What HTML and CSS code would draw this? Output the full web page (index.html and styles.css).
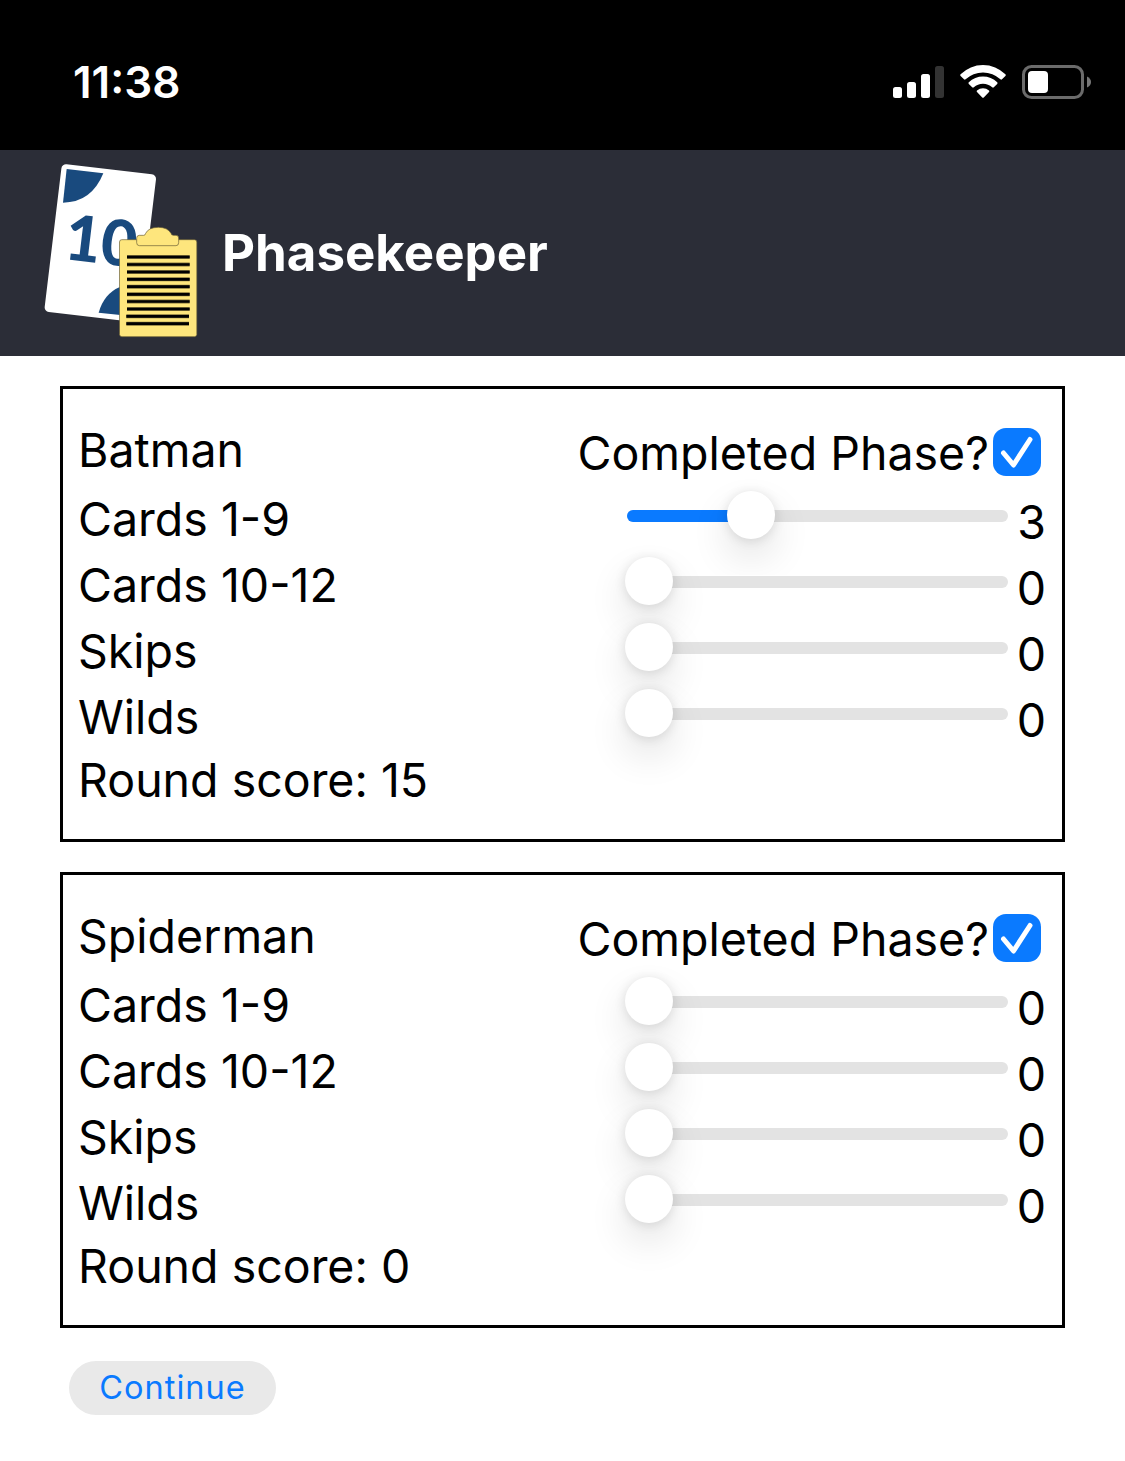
FILE: index.html
```html
<!DOCTYPE html>
<html lang="en">
<head>
<meta charset="utf-8">
<title>Phasekeeper</title>
<link rel="stylesheet" href="styles.css">
</head>
<body>
<div class="status">
  <span class="time">11:38</span>
  <svg class="status-icons" width="200" height="36" viewBox="892 64 200 36">
    <g fill="#fff">
      <rect x="893" y="87" width="9" height="11" rx="2.5"/>
      <rect x="907" y="82" width="9" height="16" rx="2.5"/>
      <rect x="921" y="74" width="9" height="24" rx="2.5"/>
      <rect x="935" y="66" width="9" height="32" rx="2.5" fill="#333"/>
      <path d="M960.6 74.2A32 32 0 0 1 1005.4 74.2Q1006.2 75 1005.4 75.9L1002 79.3Q1001.2 80 1000.4 79.3A25.500 25.500 0 0 0 965.600 79.3Q964.800 80 964 79.3L960.600 75.900Q959.800 75 960.600 74.200Z"/>
      <path d="M968.800 82.300A20.500 20.500 0 0 1 997.200 82.300Q998 83.100 997.200 84L993.800 87.300Q993 88 992.200 87.300A13.500 13.500 0 0 0 973.800 87.300Q973 88 972.200 87.300L968.800 84Q968 83.100 968.800 82.300Z"/>
      <path d="M977 90.400A9.500 9.500 0 0 1 989 90.400Q989.800 91.200 989 92L984 97.200Q983 98.200 982 97.200L977 92Q976.200 91.200 977 90.400Z"/>
      <rect x="1028" y="71" width="20" height="22" rx="4"/>
    </g>
    <rect x="1023.500" y="66.500" width="59" height="31" rx="8" fill="none" stroke="#6b6b6b" stroke-width="3"/>
    <path d="M1087 76.500Q1091 78.500 1091 82Q1091 85.500 1087 87.500Z" fill="#777"/>
  </svg>
</div>
<header class="header">
  <svg class="logo" width="190" height="206" viewBox="0 0 570 618">
    <path d="M108 57L364 87L314 502L58 472Z" fill="#fff" stroke="#fff" stroke-width="28" stroke-linejoin="round"/>
    <path d="M110 57L220 70Q184 158 99 158Z" fill="#194a7e"/>
    <path d="M206 488Q222 432 268 412H300V498Z" fill="#194a7e"/>
    <text class="logo-text" transform="translate(99 327) rotate(6.800)" textLength="216" lengthAdjust="spacingAndGlyphs">10</text>
    <g fill="#fee67d" stroke="#665c35" stroke-width="2">
      <rect x="268.500" y="269" width="232" height="291" rx="7"/>
      <path d="M328 256H341Q346 256 347 250Q356 232 385 232Q413 232 423 250Q424 256 430 256H438Q446 256 446 264V278Q446 287 438 287H328Q320 287 320 278V264Q320 256 328 256Z"/>
    </g>
    <path d="M291 321H479M291 343.500H479M291 366H479M291 388H479M291 410H479M291 433H479M291 454.500H479M291 477H479M289 499H477M289 521H477" stroke="#81733d" stroke-width="12"/>
    <path d="M291 321H479M291 343.500H479M291 366H479M291 388H479M291 410H479M291 433H479M291 454.500H479M291 477H479M289 499H477M289 521H477" stroke="#000" stroke-width="8"/>
  </svg>
  <h1 class="title">Phasekeeper</h1>
</header>
<main class="main">
  <section class="card">
    <div class="row row-head"><span class="label">Batman</span><label class="phase"><span class="phase-text">Completed Phase?</span><svg class="check" width="48" height="48" viewBox="0 0 48 48"><rect width="48" height="48" rx="13" fill="#0a7aff"/><path d="M10.500 25L20.500 37L37 11.500" fill="none" stroke="#fff" stroke-width="5" stroke-linecap="round" stroke-linejoin="round"/></svg></label></div>
    <div class="row"><span class="label">Cards 1-9</span><div class="slider"><div class="fill" style="width: 30%"></div><div class="thumb thumb-moved"></div></div><span class="value">3</span></div>
    <div class="row"><span class="label">Cards 10-12</span><div class="slider"><div class="thumb"></div></div><span class="value">0</span></div>
    <div class="row"><span class="label">Skips</span><div class="slider"><div class="thumb"></div></div><span class="value">0</span></div>
    <div class="row"><span class="label">Wilds</span><div class="slider"><div class="thumb"></div></div><span class="value">0</span></div>
    <div class="score">Round score: 15</div>
  </section>
  <section class="card">
    <div class="row row-head"><span class="label">Spiderman</span><label class="phase"><span class="phase-text">Completed Phase?</span><svg class="check" width="48" height="48" viewBox="0 0 48 48"><rect width="48" height="48" rx="13" fill="#0a7aff"/><path d="M10.500 25L20.500 37L37 11.500" fill="none" stroke="#fff" stroke-width="5" stroke-linecap="round" stroke-linejoin="round"/></svg></label></div>
    <div class="row"><span class="label">Cards 1-9</span><div class="slider"><div class="thumb"></div></div><span class="value">0</span></div>
    <div class="row"><span class="label">Cards 10-12</span><div class="slider"><div class="thumb"></div></div><span class="value">0</span></div>
    <div class="row"><span class="label">Skips</span><div class="slider"><div class="thumb"></div></div><span class="value">0</span></div>
    <div class="row"><span class="label">Wilds</span><div class="slider"><div class="thumb"></div></div><span class="value">0</span></div>
    <div class="score">Round score: 0</div>
  </section>
  <button class="continue">Continue</button>
</main>
</body>
</html>
```
FILE: styles.css
```css
* { box-sizing: border-box; }
body {
  margin: 0;
  background: #fff;
  color: #000;
  font-family: Inter, "Liberation Sans", sans-serif;
  font-size: 46.5px;
  line-height: 57px;
}
.status {
  display: flex;
  justify-content: space-between;
  height: 150px;
  padding: 54px 33px 0 73px;
  background: #000;
}
.time {
  color: #fff;
  font-size: 44px;
  font-weight: 600;
  letter-spacing: 0;
}
.status-icons { margin-top: 10px; }
.header {
  display: flex;
  align-items: flex-start;
  height: 206px;
  padding-left: 30px;
  background: #2b2d37;
}
.logo-text {
  font-family: Lato, sans-serif;
  font-size: 190px;
  font-weight: 900;
  fill: #194a7e;
}
.title {
  margin: 73px 0 0 2px;
  color: #fff;
  font-size: 51px;
  line-height: 60px;
  font-weight: 700;
}
.main { padding: 30px 60px 0; }
.card {
  height: 456px;
  margin-bottom: 30px;
  padding: 28px 16px 0 15px;
  border: 3px solid #000;
}
.row {
  display: flex;
  align-items: flex-start;
  height: 66px;
}
.label {
  flex: 1;
  padding-top: 8px;
}
.row-head .label { padding-top: 5px; }
.phase {
  display: flex;
  align-items: flex-start;
  padding-right: 5px;
}
.phase-text { padding-top: 8px; margin-right: 4px; }
.check { margin-top: 11px; }
.slider {
  position: relative;
  width: 381px;
  height: 12px;
  margin-top: 27px;
  border-radius: 6px;
  background: #e3e3e3;
}
.fill {
  height: 12px;
  border-radius: 6px 0 0 6px;
  background: #0a7aff;
}
.thumb {
  position: absolute;
  left: -2px;
  top: -19px;
  width: 48px;
  height: 48px;
  border-radius: 50%;
  background: #fff;
  box-shadow: 0 18px 39px rgba(0, 0, 0, .12), 0 1.5px 12px rgba(0, 0, 0, .12);
}
.thumb-moved {
  left: 100px;
  clip-path: inset(-60px -60px -36px -60px);
}
.value {
  width: 38px;
  padding-top: 11px;
  text-align: right;
}
.score { padding-top: 5px; }
.continue {
  display: block;
  height: 54px;
  width: 207px;
  margin: 33px 0 0 9px;
  padding: 0;
  border: 0;
  border-radius: 27px;
  background: #e9e9e9;
  color: #0a7aff;
  font: 32.5px/54px Inter, "Liberation Sans", sans-serif;
  letter-spacing: 1px;
}
```
